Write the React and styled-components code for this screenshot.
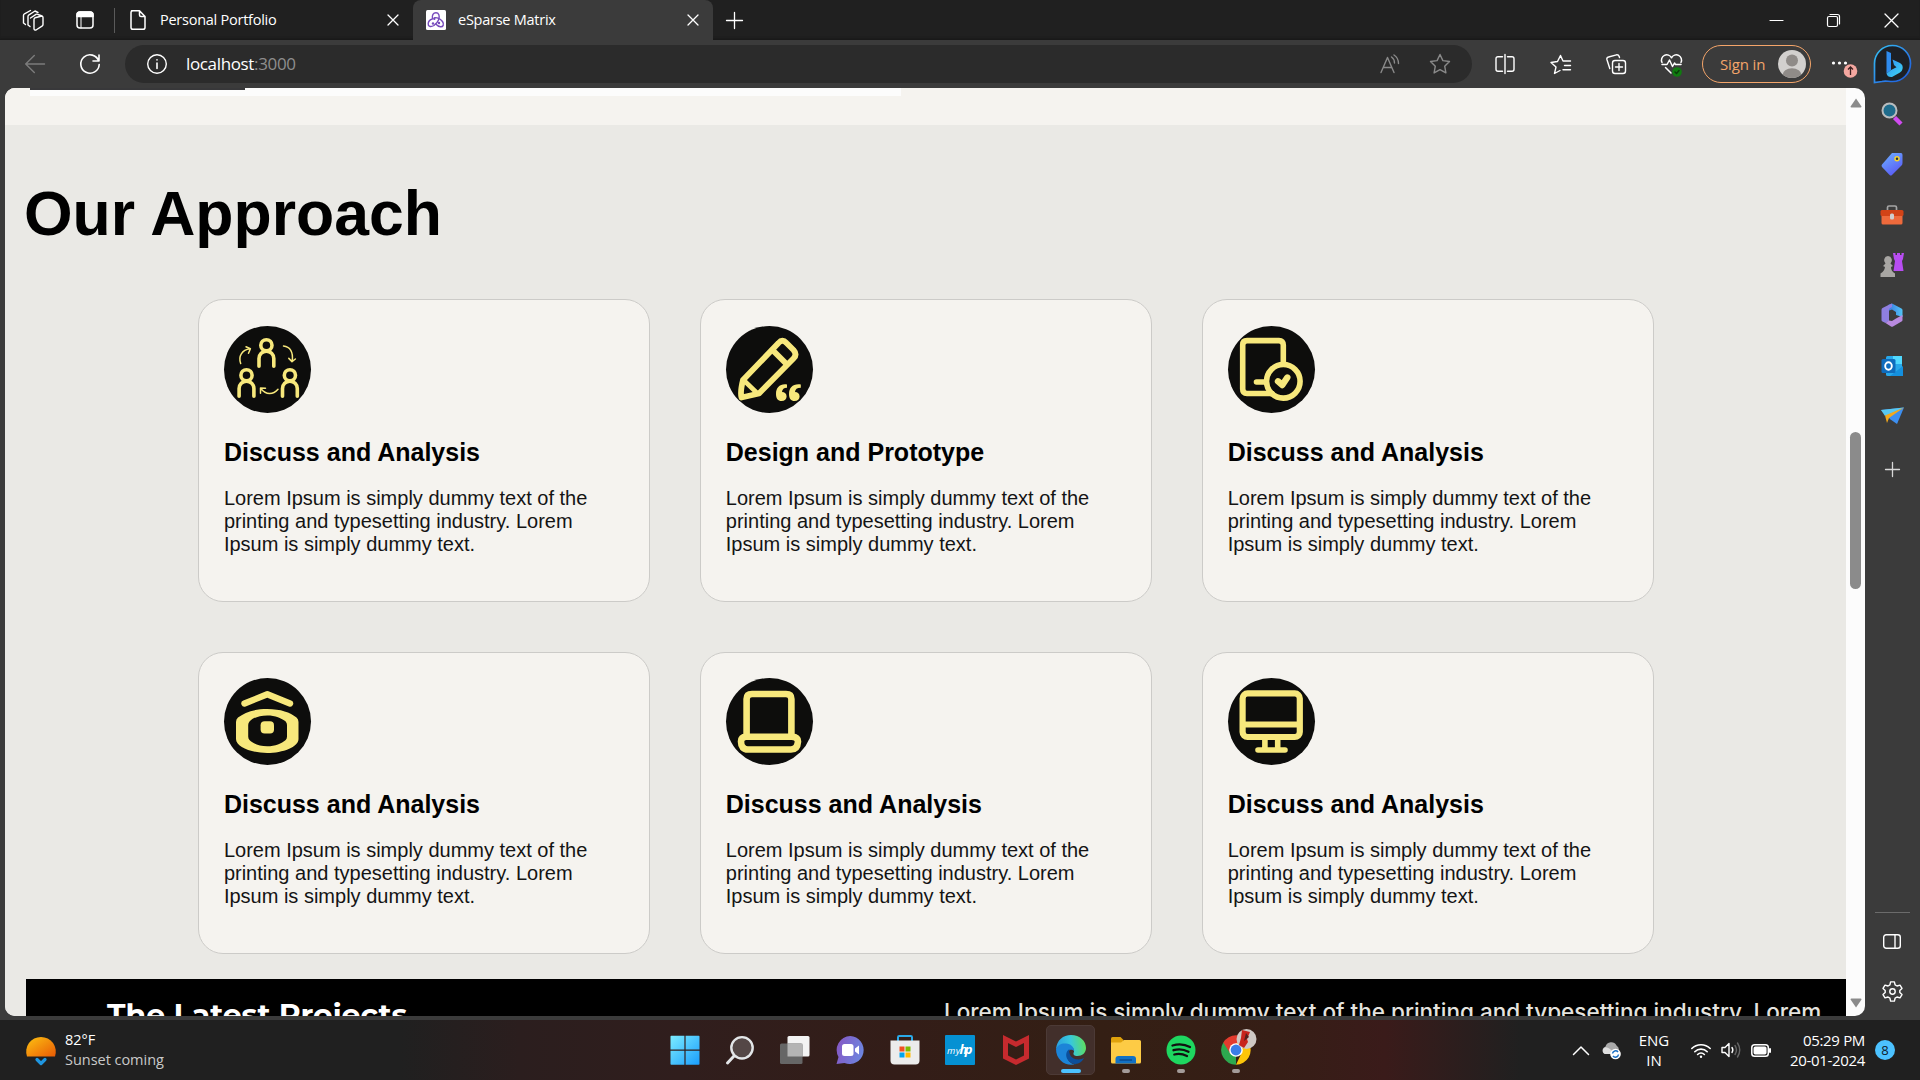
import React from "react";
import styled, { createGlobalStyle, css } from "styled-components";

const GlobalStyle = createGlobalStyle`
  *, *::before, *::after { box-sizing: border-box; }
  body { margin: 0; background: #3b3b3b; overflow: hidden; }
  h1, h2, h3, p { margin: 0; }
  svg { display: block; flex: none; overflow: visible; }
`;

const uiFont = css`
  font-family: "Open Sans", "Noto Sans", sans-serif;
`;

const Screen = styled.div`
  width: 1920px;
  height: 1080px;
  display: flex;
  flex-direction: column;
  overflow: hidden;
  background: #3b3b3b;
  ${uiFont}
`;

/* ---------- tab strip ---------- */

const TabStrip = styled.header`
  height: 40px;
  flex: none;
  display: flex;
  align-items: stretch;
  background: #202020;
  box-shadow: inset 0 -3px 3px -2px #161616;
`;

const StripTools = styled.div`
  width: 114px;
  display: flex;
  align-items: center;
  padding-left: 22px;
  gap: 32px;
`;

const StripDivider = styled.span`
  width: 1px;
  height: 25px;
  align-self: center;
  background: #5a5a5a;
`;

const Tab = styled.div`
  width: ${(p) => (p.$active ? 300 : 298)}px;
  display: flex;
  align-items: center;
  padding: 0 15px 0 13px;
  background: ${(p) => (p.$active ? "#3b3b3b" : "transparent")};
  border-radius: 8px 8px 0 0;
  color: #fff;
`;

const TabTitle = styled.span`
  flex: 1;
  margin-left: 12px;
  font-size: 14.5px;
  letter-spacing: -0.25px;
  line-height: 20px;
  white-space: nowrap;
`;

const NewTab = styled.div`
  width: 42px;
  display: flex;
  align-items: center;
  justify-content: center;
`;

const WindowButtons = styled.div`
  margin-left: auto;
  display: flex;
  align-items: center;
`;

const WindowButton = styled.div`
  width: 57.5px;
  display: flex;
  justify-content: center;
`;

/* ---------- toolbar ---------- */

const Toolbar = styled.div`
  height: 48px;
  flex: none;
  display: flex;
  align-items: center;
`;

const NavButton = styled.div`
  width: 55px;
  display: flex;
  justify-content: center;
`;

const NavGroup = styled.div`
  width: 125px;
  display: flex;
  padding-left: 7px;
`;

const AddressBar = styled.div`
  width: 1347px;
  height: 38px;
  border-radius: 19px;
  background: #2b2b2b;
  display: flex;
  align-items: center;
  padding: 0 21px 0 22px;
`;

const Url = styled.div`
  flex: 1;
  margin-left: 19px;
  font-size: 17px;
  letter-spacing: -0.35px;
  line-height: 24px;
  color: #fff;
  span { color: #8e8e8e; }
`;

const AddressIcons = styled.div`
  display: flex;
  gap: 29px;
  align-items: center;
`;

const ToolbarIcons = styled.div`
  width: 230px;
  padding-left: 5px;
  display: flex;
`;

const ToolbarIcon = styled.div`
  width: 55.6px;
  display: flex;
  justify-content: center;
`;

const SignIn = styled.div`
  width: 109px;
  height: 38px;
  border: 1.5px solid #f4a56a;
  border-radius: 19px;
  display: flex;
  align-items: center;
  justify-content: space-between;
  padding: 0 4px 0 17px;
  color: #f4a56a;
  font-size: 15px;
  letter-spacing: -0.15px;
`;

const MenuSlot = styled.div`
  width: 51px;
  margin-left: 11px;
`;

/* ---------- body ---------- */

const Body = styled.div`
  height: 932px;
  flex: none;
  display: flex;
  padding-left: 5px;
`;

const Viewport = styled.main`
  width: 1860px;
  height: 928px;
  display: flex;
  overflow: hidden;
  border-radius: 10px;
  background: #fcfcfc;
`;

const Page = styled.div`
  width: 1841px;
  height: 928px;
  overflow: hidden;
  background: #eae9e5;
  font-family: "Liberation Sans", Arial, sans-serif;
`;

const PreviousSection = styled.div`
  height: 37px;
  background: #f5f3ef;
  padding-left: 25px;
`;

const PreviousPanel = styled.div`
  width: 871px;
  height: 8px;
  background: #fcfcfc;
`;

const PreviousBar = styled.div`
  width: 215px;
  height: 2px;
  background: #38383a;
`;

const Heading = styled.h1`
  margin: 52px 0 0 19px;
  font-size: 62.5px;
  line-height: 72px;
  font-weight: 700;
  color: #000;
`;

const CardGrid = styled.section`
  margin: 50.4px 0 0 193.4px;
  display: grid;
  grid-template-columns: repeat(3, 451.6px);
  grid-auto-rows: 302.2px;
  gap: 50px 50.3px;
`;

const Card = styled.article`
  border: 1px solid #cccbc8;
  border-radius: 25px;
  background: #f5f3ef;
  padding: 25.25px 24.5px;
`;

const CardTitle = styled.h2`
  margin-top: 25.4px;
  font-size: 25px;
  line-height: 29px;
  font-weight: 700;
  color: #000;
`;

const CardText = styled.p`
  width: 375px;
  margin-top: 20px;
  font-size: 20px;
  line-height: 23px;
  color: #141414;
`;

const Projects = styled.section`
  height: 80px;
  margin: 25px 0 0 21px;
  display: flex;
  background: #000;
  padding-left: 81px;
`;

const ProjectsTitle = styled.h2`
  width: 837px;
  margin-top: 18px;
  font-family: "Montserrat", "Open Sans", sans-serif;
  font-size: 29.9px;
  font-weight: 700;
  line-height: 36px;
  color: #fff;
`;

const ProjectsText = styled.p`
  margin-top: 18px;
  font-family: Inter, sans-serif;
  font-size: 22.5px;
  font-weight: 500;
  line-height: 30px;
  color: #e4e3df;
  white-space: nowrap;
`;

const ScrollTrack = styled.div`
  width: 19px;
  display: flex;
  flex-direction: column;
  align-items: center;
  padding: 10px 0 8px;
`;

const ScrollThumb = styled.div`
  width: 11px;
  height: 157px;
  margin: 324px 0 auto;
  border-radius: 6px;
  background: #8b8b8b;
`;

const Sidebar = styled.aside`
  width: 54px;
  display: flex;
  flex-direction: column;
  align-items: center;
  padding: 1px 0 3px;
`;

const SideIcon = styled.div`
  height: 50.3px;
  display: flex;
  align-items: center;
`;

const AddButton = styled(SideIcon)`
  margin-top: 3px;
`;

const SideDivider = styled.div`
  width: 35px;
  height: 1px;
  margin: auto 0 3px;
  background: #6b6b6b;
`;

/* ---------- taskbar ---------- */

const Taskbar = styled.footer`
  height: 60px;
  flex: none;
  display: flex;
  align-items: center;
  color: #fff;
  font-size: 14.5px;
  line-height: 20px;
  letter-spacing: -0.03px;
  background: linear-gradient(90deg, #202020 0, #202020 400px, #2b1e1e 520px, #301e1d 680px, #331d18 900px, #341f14 1100px, #361e16 1280px, #3a1b1a 1385px, #202020 1520px);
`;

const Weather = styled.div`
  width: 660.5px;
  padding-left: 26px;
  display: flex;
  align-items: center;
  gap: 9px;
`;

const Muted = styled.div`
  color: #c9c9c9;
`;

const Apps = styled.div`
  display: flex;
`;

const AppTile = styled.div`
  width: 49px;
  height: 50px;
  margin-right: 6.1px;
  border-radius: 5px;
  display: flex;
  flex-direction: column;
  align-items: center;
  justify-content: space-between;
  padding: 9px 0 1px;
  border: 1px solid ${(p) => (p.$active ? "#4c3a36" : "transparent")};
  background: ${(p) => (p.$active ? "#422f2b" : "transparent")};
`;

const Indicator = styled.span`
  width: ${(p) => (p.$active ? 20 : 8)}px;
  height: 4px;
  border-radius: 2px;
  background: ${(p) => (p.$active ? "#4cc2ff" : p.$open ? "#a39b99" : "transparent")};
`;

const Tray = styled.div`
  margin-left: auto;
  display: flex;
  align-items: center;
  padding-right: 25px;
`;

const TrayIcon = styled.div`
  width: 30px;
  display: flex;
  justify-content: center;
`;

const Language = styled.div`
  width: 56px;
  margin-right: 4px;
  text-align: center;
  font-size: 15px;
`;

const Clock = styled.div`
  width: 89px;
  text-align: right;
  font-size: 15px;
  letter-spacing: -0.33px;
  white-space: nowrap;
`;

const CountBadge = styled.div`
  width: 20px;
  height: 20px;
  margin-left: 10px;
  border-radius: 50%;
  background: #4cc2ff;
  color: #10202a;
  font-size: 13px;
  text-align: center;
`;

/* ---------- drawings ---------- */

const Line = ({ w = 20, h = w, box = `0 0 ${w} ${h}`, color = "#fff", sw = 1.3, children }) => (
  <svg width={w} height={h} viewBox={box} fill="none" stroke={color} strokeWidth={sw} strokeLinecap="round" strokeLinejoin="round">
    {children}
  </svg>
);

const CloseIcon = ({ size = 9 }) => (
  <Line w={size} sw={1.3}>
    <path d={`M0 0L${size} ${size}M${size} 0L0 ${size}`} />
  </Line>
);

const Disc = ({ children }) => (
  <svg width="87" height="87" viewBox="0 0 87 87" fill="none" stroke="#f7e87c" strokeLinecap="round" strokeLinejoin="round">
    <circle cx="43.5" cy="43.5" r="43.5" fill="#0d0d0c" stroke="none" />
    {children}
  </svg>
);

const Person = ({ x, y }) => (
  <g transform={`translate(${x} ${y})`} strokeWidth="3.6">
    <circle r="5.6" />
    <path d="M-7.4 21V13.2a7.4 7.4 0 0 1 14.8 0V21" />
  </g>
);

const discIcons = {
  team: (
    <Disc>
      <Person x={42.4} y={19.3} />
      <Person x={22.5} y={49.3} />
      <Person x={65.9} y={49.3} />
      <g strokeWidth="1.5">
        <path d="M16.7 37.5C14 30 18 24 26 22.8M22 20.7L26.4 22.7L24.5 27.2" />
        <path d="M59.5 20C66 20.5 69.5 26 68.2 35.2M64.8 32.4L68 35.6L71.4 33" />
        <path d="M54 63.2C49 69 42 69 37 62.7M36.5 67.3V62L41.5 62.2" />
      </g>
    </Disc>
  ),
  pencil: (
    <Disc>
      <g strokeWidth="5.8">
        <path d="M17 54L52.5 17Q56.3 12.5 60.5 17L67.5 24Q71.5 28.5 67.5 32.5L33 67.5L15.5 71.5Q14 66 17 54Z" />
        <path d="M46.5 24L60 37.5" />
        <path d="M18 54.5L31 67" strokeWidth="4.6" />
      </g>
      <g fill="#f7e87c" stroke="none">
        <path d="M61 58.5C54 57.5 50 61.5 50 68C50 72.5 52 75 55.5 75C58.7 75 60.6 73 60.6 70.4C60.6 67.6 58.7 66 56 66C56.2 63 58 61.8 61 61.7Z" />
        <path d="M74.8 58.5C67 57.5 63 61.5 63 68C63 72.5 65 75 68.5 75C71.7 75 73.6 73 73.6 70.4C73.6 67.6 71.7 66 69 66C69.2 63 71 61.8 74.8 61.7Z" />
      </g>
    </Disc>
  ),
  tablet: (
    <Disc>
      <g strokeWidth="5.6">
        <path d="M55.3 37V19Q55.3 14.6 51 14.6H19Q14.7 14.6 14.7 19V63Q14.7 67.5 19 67.5H44M28.5 56H38" />
        <circle cx="55.3" cy="55.3" r="16.8" />
        <path d="M50 55.3L54.3 59L59.3 51.500" strokeWidth="6.4" />
      </g>
    </Disc>
  ),
  camera: (
    <Disc>
      <path d="M20.5 25.500L43.3 16.300L66 25.500" strokeWidth="6.4" />
      <g fill="#f7e87c" stroke="none">
        <path fillRule="evenodd" d="M43.2 31C57 31 66 34.500 72.500 39.500Q74.500 41 74.500 44V61C74.5 69 59 75 43.2 75S12 69 12 61V44Q12 41 14 39.500C20.500 34.500 29.500 31 43.2 31ZM43.2 37.4C35 37.4 29 40 25.500 43.500Q24.200 45 24.200 47V58.500Q24.200 60.500 25.500 62C29 65.500 35 68.3 43.2 68.3S57.500 65.500 61.700 62Q63 60.500 63 58.500V47Q63 45 61.700 43.500C57.500 40 51.500 37.4 43.2 37.4Z" />
        <rect x="36.6" y="43.2" width="13.4" height="12.2" rx="4" />
      </g>
    </Disc>
  ),
  laptop: (
    <Disc>
      <path d="M20.6 56V21Q20.6 16 26 16H60Q65.4 16 65.4 21V56" strokeWidth="6.6" />
      <path d="M20 58.8H66Q72 59 72 63.5Q71.5 71.5 65 71.5H22Q15 71.5 15 63.5Q15 59 20 58.8Z" strokeWidth="6.6" />
    </Disc>
  ),
  desktop: (
    <Disc>
      <rect x="14.6" y="15.4" width="57.2" height="43.6" rx="5" strokeWidth="6.2" />
      <path d="M15 46.6H71" strokeWidth="6" />
      <path d="M36.9 61V70M49.7 61V70M30 72H57" strokeWidth="5.6" />
    </Disc>
  ),
};

const cards = [
  ["team", "Discuss and Analysis"],
  ["pencil", "Design and Prototype"],
  ["tablet", "Discuss and Analysis"],
  ["camera", "Discuss and Analysis"],
  ["laptop", "Discuss and Analysis"],
  ["desktop", "Discuss and Analysis"],
];

const BingIcon = () => (
  <svg width="38" height="40" viewBox="0 0 38 40">
    <defs>
      <linearGradient id="bingRing" x1="0" y1="0" x2="1" y2="1">
        <stop offset="0" stopColor="#35c5f5" />
        <stop offset="0.6" stopColor="#2a7de8" />
        <stop offset="1" stopColor="#1b58d8" />
      </linearGradient>
      <linearGradient id="bingB" x1="0" y1="0" x2="1" y2="1">
        <stop offset="0" stopColor="#2f8cf0" />
        <stop offset="1" stopColor="#3fd8f5" />
      </linearGradient>
    </defs>
    <path d="M1.5 38.5V19.5A18 18 0 1 1 19.5 37.5C15 37.5 12 36.5 9 37.5Z" fill="#1d2026" stroke="url(#bingRing)" strokeWidth="1.7" />
    <path d="M13.500 7L18 9V26L13.500 29.5Z" fill="#2e8bf0" />
    <path d="M13.500 29.5L18 26L23.500 23.300L21 21L19.500 15.500L27 19Q30.500 21 29.500 25Q29 27.500 27 28.500L19 33Q14.500 33.500 13.500 29.5Z" fill="url(#bingB)" />
  </svg>
);

const sideIcons = [
  <svg width="22" height="24" viewBox="0 0 22 24">
    <path d="M13.5 15.5L20 22" stroke="#d04bf0" strokeWidth="4.4" />
    <circle cx="8.5" cy="8.5" r="7" fill="#1f6c8c" stroke="#b9bcbe" strokeWidth="2" />
  </svg>,
  <svg width="22" height="24" viewBox="0 0 22 24">
    <defs>
      <linearGradient id="tag" x1="0" y1="0" x2="0.6" y2="1">
        <stop offset="0" stopColor="#6db4ff" />
        <stop offset="1" stopColor="#5a5cf6" />
      </linearGradient>
    </defs>
    <path d="M11 1H20Q21.5 1 21.5 3V11Q21.5 12.5 20.5 13.5L11 23Q9.8 24 8.6 23L1 15Q0 13.7 1 12.5Z" fill="url(#tag)" />
    <circle cx="16" cy="6.7" r="2" fill="#234" stroke="#f6d32d" strokeWidth="1.5" />
  </svg>,
  <svg width="24" height="20" viewBox="0 0 24 20">
    <path d="M7.5 6V2.5Q7.5 1 9 1H15Q16.5 1 16.5 2.5V6" fill="none" stroke="#a5a5a5" strokeWidth="1.7" />
    <rect x="1.5" y="9" width="21" height="10.5" rx="1.5" fill="#ee6a3c" />
    <rect x="0.5" y="5" width="23" height="6" rx="1.5" fill="#d24317" />
    <rect x="10" y="8.5" width="4" height="6" rx="1.5" fill="#cfcfcf" />
  </svg>,
  <svg width="24" height="24" viewBox="0 0 24 24">
    <path d="M13 0H15.5V2H17V0H20V2H21.5V0H24L23 6L22 8L23.5 18H13.5L15 8L14 6Z" fill="#b84df2" />
    <path d="M8 3A4.300 4.300 0 0 1 10.5 10.5L13 13L11 14Q11 18 15 20.5V24H0.500V20.5Q4.500 18 5 14L3 13L5.5 10.5A4.300 4.300 0 0 1 8 3Z" fill="#a8a6a3" />
  </svg>,
  <svg width="22" height="24" viewBox="0 0 22 24">
    <defs>
      <linearGradient id="m365" x1="0" y1="0" x2="1" y2="0">
        <stop offset="0" stopColor="#3a78e0" />
        <stop offset="1" stopColor="#52c4f6" />
      </linearGradient>
    </defs>
    <path d="M11 0.5L20.500 5.500Q21.500 6 21.500 7V14L15 12V9L11 6.5L7 8V2Z" fill="url(#m365)" />
    <path d="M7.500 2L1.500 5Q0.500 5.500 0.500 7V17Q0.500 18 1.500 18.500L4.500 20L8 18V7Q8 5 11 4V0.500Z" fill="#8f7fe0" />
    <path d="M4.500 20L10 23.500Q11 24 12 23.500L20.500 18.500Q21.500 18 21.500 17V12L15 15.500L11 18L8 17.500Z" fill="#b98ae0" />
  </svg>,
  <svg width="22" height="22" viewBox="0 0 22 22">
    <rect x="5" y="1" width="16" height="20" rx="1.5" fill="#28a8ea" />
    <rect x="12" y="1" width="9" height="8" fill="#50d9ff" />
    <path d="M22 11V21H9Z" fill="#1490df" />
    <rect x="0.5" y="4" width="14" height="14" rx="1.5" fill="#0f6cbd" />
    <ellipse cx="7.5" cy="11" rx="3.3" ry="3.7" fill="none" stroke="#fff" strokeWidth="1.9" />
  </svg>,
  <svg width="23" height="18" viewBox="0 0 23 18">
    <path d="M0 3L23 0.5L16 17L9.5 12.5Z" fill="#3d8ff0" />
    <path d="M0 3L23 0.5L4 9Z" fill="#58c8f0" />
    <path d="M4 8.5L23 0.5L8 11L6 16Z" fill="#f3a91c" />
  </svg>,
];

const apps = [
  {
    icon: (
      <svg width="30" height="30" viewBox="0 0 30 30">
        <defs>
          <linearGradient id="win" x1="0" y1="0" x2="1" y2="1">
            <stop offset="0" stopColor="#7cecff" />
            <stop offset="1" stopColor="#1a9dfc" />
          </linearGradient>
        </defs>
        <path d="M0.5 1.5Q0.5 0.7 1.3 0.7H14.4V14.6H0.5ZM15.6 0.7H28.7Q29.5 0.7 29.5 1.5V14.6H15.6ZM0.5 15.8H14.4V29.7H1.3Q0.5 29.7 0.5 28.9ZM15.6 15.8H29.5V28.9Q29.5 29.7 28.7 29.7H15.6Z" fill="url(#win)" />
      </svg>
    ),
  },
  {
    icon: (
      <svg width="30" height="30" viewBox="0 0 30 30" fill="#544746" stroke="#e3e6e8">
        <path d="M9 21L2.5 28" strokeWidth="3" strokeLinecap="round" />
        <circle cx="17" cy="12.8" r="10.7" strokeWidth="2.4" />
      </svg>
    ),
  },
  {
    icon: (
      <svg width="30" height="30" viewBox="0 0 30 30">
        <rect x="7.5" y="1" width="22" height="20.5" rx="1.5" fill="#f3f3f3" />
        <rect x="0" y="8.5" width="22.5" height="20.5" rx="1.5" fill="#666" />
        <path d="M7.5 8.5H22.5V21.5H7.5Z" fill="#b4b4b4" />
      </svg>
    ),
  },
  {
    icon: (
      <svg width="30" height="30" viewBox="0 0 30 30">
        <defs>
          <linearGradient id="chat" x1="0" y1="0.3" x2="1" y2="0.6">
            <stop offset="0" stopColor="#8558c4" />
            <stop offset="1" stopColor="#6c86e0" />
          </linearGradient>
        </defs>
        <path d="M15.3 1A14 14 0 1 1 9.5 28L1.5 29L3.5 22A14 14 0 0 1 15.3 1Z" fill="url(#chat)" />
        <rect x="7" y="9" width="11.5" height="12" rx="2.5" fill="#fff" />
        <path d="M20 13.5L24 10.5V19.5L20 16.5Z" fill="#fff" />
      </svg>
    ),
  },
  {
    icon: (
      <svg width="30" height="30" viewBox="0 0 30 30">
        <path d="M8 7V2.2Q8 1 9.2 1H20.8Q22 1 22 2.2V7" fill="none" stroke="#2aaae8" strokeWidth="2" />
        <path d="M0.5 5.5H29.5V25.5Q29.5 29.5 25.5 29.5H4.5Q0.5 29.5 0.5 25.5Z" fill="#ececec" />
        <rect x="9.5" y="11.5" width="5" height="5" fill="#f25022" />
        <rect x="15.5" y="11.5" width="5" height="5" fill="#7fba00" />
        <rect x="9.5" y="17.5" width="5" height="5" fill="#00a4ef" />
        <rect x="15.5" y="17.5" width="5" height="5" fill="#ffb900" />
      </svg>
    ),
  },
  {
    icon: (
      <svg width="30" height="30" viewBox="0 0 30 30">
        <rect width="30" height="30" rx="1" fill="#0591d3" />
        <text x="2" y="18.5" fill="#fff" fontFamily="Open Sans, sans-serif" fontSize="9.5" fontStyle="italic" textLength="13">my</text>
        <text x="14.5" y="18.5" fill="#fff" fontFamily="Open Sans, sans-serif" fontSize="13" fontWeight="700" fontStyle="italic" textLength="13">hp</text>
      </svg>
    ),
  },
  {
    icon: (
      <svg width="28" height="30" viewBox="0 0 28 30">
        <path d="M1 0L14 6.5L27 0V23.5L14 30L1 23.5ZM6 8V20.5L14 24.5L22 20.5V8L14 12Z" fill="#c62a2e" fillRule="evenodd" />
      </svg>
    ),
  },
  {
    active: true,
    icon: (
      <svg width="30" height="30" viewBox="0 0 30 30">
        <defs>
          <linearGradient id="edgeTop" x1="0" y1="0.5" x2="1" y2="0.4">
            <stop offset="0" stopColor="#2a9fe0" />
            <stop offset="0.5" stopColor="#38c8dc" />
            <stop offset="1" stopColor="#5fdf5c" />
          </linearGradient>
        </defs>
        <path d="M0 14C1 5 7 0 15 0C24 0 30 6 30 13C30 18 26 21 21.5 21C17 21 17 18.5 18 17C18.5 14 16 10 10 10C5 10 2 12 0 14Z" fill="url(#edgeTop)" />
        <path d="M0 14C2 9.500 6 8 10 8.500C15 9 18 12 18.200 16C15 13 10.500 16 11 21C11.500 27 17 30 20 29C11 32 0 26 0 14Z" fill="#1c84d8" />
        <path d="M13.500 14C10 16 9 21 12 25C15 29 19 29.500 22 28.500C25 27.500 27.500 24.500 28 23C24 25.500 16 25 14 19.500C13 17 13 15.500 13.500 14Z" fill="#0c4f9c" />
      </svg>
    ),
  },
  {
    open: true,
    icon: (
      <svg width="30" height="30" viewBox="0 0 30 30">
        <path d="M0 3.500Q0 2 1.500 2H9.500L12.500 5V10H0Z" fill="#e0a20c" />
        <path d="M0 7.500H10L13 5H28.500Q30 5 30 6.500V27Q30 28.500 28.500 28.500H1.500Q0 28.500 0 27Z" fill="#fdcb45" />
        <path d="M4.500 28.500V24Q4.500 21 7.500 21H22Q25 21 25 24V28.500Z" fill="#1271c4" />
        <path d="M8.500 25H21" stroke="#0a4a8f" strokeWidth="1.500" />
      </svg>
    ),
  },
  {
    open: true,
    icon: (
      <svg width="30" height="30" viewBox="0 0 30 30">
        <circle cx="15" cy="15" r="14.500" fill="#1ed760" />
        <path d="M6.500 10.500C12 8.800 19 9.300 24 12M7.500 15.200C12 13.800 18 14.300 22.500 16.700M8.300 19.500C12 18.500 17 19 21 21" fill="none" stroke="#111" strokeWidth="2.300" strokeLinecap="round" />
      </svg>
    ),
  },
  {
    open: true,
    icon: (
      <svg width="30" height="30" viewBox="0 0 30 30">
        <path d="M15 15L2.300 7.500A14.700 14.700 0 0 1 27.700 7.700Z" fill="#e33b2e" />
        <path d="M15 15L15.000 29.700A14.700 14.700 0 0 1 2.300 7.500Z" fill="#2da94f" />
        <path d="M15 8H27.900A14.700 14.700 0 0 1 15 29.700L20.500 18Z" fill="#fdc50a" />
        <path d="M2.300 7.500L9 18L15 8Z" fill="#e33b2e" />
        <circle cx="15" cy="15" r="6.800" fill="#fff" />
        <circle cx="15" cy="15" r="5.400" fill="#3a7de8" />
        <circle cx="25.500" cy="4" r="10" fill="#cfc8c4" />
        <path d="M21 -5L29 -3L26 4L27 7L23 13L18 10L20 3Z" fill="#c8241c" />
        <path d="M25 -2L28 2L23 6Z" fill="#56201d" />
      </svg>
    ),
  },
];

export default function App() {
  return (
    <Screen>
      <GlobalStyle />
      <TabStrip>
        <StripTools>
          <Line w={22} sw={1.4}>
            <path d="M8.500 8.500L14 4.800Q15 4.300 16 5L20 6.500Q21 7 21 8V15Q21 16 20 16.700L14 20.500Q12.500 21 12 19.500V10Q12 9 13 8.200L20 6.500M8 17L6 15.500V7Q6 6 7 5.300L13 1.500L16 3M3.500 15L1.500 13.500V6Q1.500 5 2.500 4.300L8.500 1" transform="translate(0 .5)" />
          </Line>
          <Line w={18} sw={1.5}>
            <rect x="1" y="1" width="16" height="16" rx="3" />
            <path d="M1 5.500V4Q1 1 4 1H14Q17 1 17 4V5.500Z" fill="#fff" />
            <path d="M5 6V17" strokeWidth="1" />
          </Line>
        </StripTools>
        <StripDivider />
        <Tab>
          <Line w={20} h={20} sw={1.5}>
            <path d="M3.500 0.700H11.500L17 6.500V17.500Q17 19.300 15 19.300H5Q3 19.300 3 17.500V2.500Q3 0.700 5 0.700M11.500 0.700V5Q11.500 6.500 13 6.500H17" />
          </Line>
          <TabTitle>Personal Portfolio</TabTitle>
          <CloseIcon size={10} />
        </Tab>
        <Tab $active>
          <svg width="20" height="20" viewBox="0 0 20 20">
            <rect width="20" height="20" rx="1.500" fill="#fff" />
            <g fill="none" stroke="#764abc" strokeWidth="1.400">
              <path d="M6.500 9.500C5.500 5 7.500 2.800 10 2.800S14.300 5.500 12.500 10C11.500 12.500 10 14 8 15.500C4.500 17.500 2 16.500 2.200 13.800C2.300 11 4.500 9.500 6.500 9" />
              <path d="M8 8C10 7 14 8 16.500 11.500C18.500 14.500 17 17 14.500 16.800C12.500 16.700 11 15.500 9.500 13.800" />
            </g>
            <circle cx="8.300" cy="8.700" r="1.200" fill="#764abc" />
            <circle cx="13" cy="13" r="1.200" fill="#764abc" />
            <circle cx="7" cy="13.500" r="1.200" fill="#764abc" />
          </svg>
          <TabTitle>eSparse Matrix</TabTitle>
          <CloseIcon size={10} />
        </Tab>
        <NewTab>
          <Line w={17}>
            <path d="M8.500 0.500V16.500M0.500 8.500H16.500" />
          </Line>
        </NewTab>
        <WindowButtons>
          <WindowButton>
            <Line w={13} sw={1.200}>
              <path d="M0 6.500H13" />
            </Line>
          </WindowButton>
          <WindowButton>
            <Line w={13} sw={1.200}>
              <rect x="0.500" y="2.500" width="10" height="10" rx="1.500" />
              <path d="M3 0.500H10.500Q12.500 0.500 12.500 2.500V10" />
            </Line>
          </WindowButton>
          <WindowButton>
            <CloseIcon size={13} />
          </WindowButton>
        </WindowButtons>
      </TabStrip>

      <Toolbar>
        <NavGroup>
          <NavButton>
            <Line w={20} color="#7c7c7c" sw={1.400}>
              <path d="M19.500 10H0.700M9.300 1.500L0.700 10L9.300 18.500" />
            </Line>
          </NavButton>
          <NavButton>
            <Line w={20} sw={1.600}>
              <path d="M18.700 7A9.200 9.200 0 1 0 19.200 10.500M19 1V7H13" />
            </Line>
          </NavButton>
        </NavGroup>
        <AddressBar>
          <Line w={20} sw={1.400}>
            <circle cx="10" cy="10" r="9.300" />
            <path d="M10 9V14.500M10 5.800V6" strokeWidth="1.600" />
          </Line>
          <Url>
            localhost<span>:3000</span>
          </Url>
          <AddressIcons>
            <Line w={20} color="#8a8a8a" sw={1.400}>
              <path d="M1 18.500L7.500 3.500L14 18.500M3.300 13.500H11.700M11.500 3Q14.500 5 14.500 9M14 1Q18.500 4 18.500 9.500" />
            </Line>
            <Line w={22} color="#8a8a8a" sw={1.400}>
              <path d="M11 1.500L13.900 7.600L20.500 8.500L15.700 13.200L16.900 19.900L11 16.700L5.100 19.900L6.300 13.200L1.500 8.500L8.100 7.600Z" />
            </Line>
          </AddressIcons>
        </AddressBar>
        <ToolbarIcons>
          <ToolbarIcon>
            <Line w={20} sw={1.400}>
              <path d="M10 0.500V19.500M7.500 2.800H3Q1 2.800 1 4.800V15.200Q1 17.200 3 17.200H7.500M12.500 2.800H17Q19 2.800 19 4.800V15.200Q19 17.200 17 17.200H12.500" />
            </Line>
          </ToolbarIcon>
          <ToolbarIcon>
            <Line w={21} sw={1.400}>
              <path d="M10 16.500L4.500 19.500L6 13L1 8.500L7.500 7.500L10.500 1.500L13 7H20.500M14.500 11.500H20.500M13 15.700H20.500" />
            </Line>
          </ToolbarIcon>
          <ToolbarIcon>
            <Line w={20} sw={1.400}>
              <rect x="6.500" y="6.500" width="13" height="13" rx="2.500" />
              <path d="M13 9.500V16.500M9.500 13H16.500M3.800 14.500L0.900 5.500Q0.500 3.500 2.500 3L10.500 0.800Q12.500 0.500 13.200 2.500L13.500 3.500" />
            </Line>
          </ToolbarIcon>
          <ToolbarIcon>
            <Line w={21} sw={1.500}>
              <path d="M1 8.500A5 5 0 0 1 10.500 3.800A5 5 0 0 1 20 8.500M1 10.500H6L8.500 6L11.500 12.500L13.500 9L14.500 10.500H20M4.500 13.500L10 19" />
              <circle cx="16" cy="18" r="4.800" fill="#107c10" stroke="none" />
              <path d="M14 18L15.500 19.500L18 16.500" stroke="#0a3d0a" />
            </Line>
          </ToolbarIcon>
        </ToolbarIcons>
        <SignIn>
          Sign in
          <svg width="28" height="28" viewBox="0 0 28 28">
            <defs>
              <clipPath id="avatar">
                <circle cx="14" cy="14" r="14" />
              </clipPath>
            </defs>
            <circle cx="14" cy="14" r="14" fill="#d2d0ce" />
            <g clipPath="url(#avatar)" fill="#8f8b88">
              <circle cx="14" cy="10.500" r="6" />
              <ellipse cx="14" cy="25" rx="9.500" ry="6.800" />
            </g>
          </svg>
        </SignIn>
        <MenuSlot>
          <svg width="50" height="28" viewBox="0 0 50 28">
            <g fill="#fff">
              <circle cx="11.500" cy="13" r="1.600" />
              <circle cx="17.500" cy="13" r="1.600" />
              <circle cx="23.500" cy="13" r="1.600" />
            </g>
            <circle cx="28.500" cy="21" r="6.800" fill="#f4a7a0" />
            <path d="M28.500 25V17.500M26 19.500L28.500 17L31 19.500" fill="none" stroke="#3b2020" strokeWidth="1.300" />
          </svg>
        </MenuSlot>
        <BingIcon />
      </Toolbar>

      <Body>
        <Viewport>
          <Page>
            <PreviousSection>
              <PreviousPanel>
                <PreviousBar />
              </PreviousPanel>
            </PreviousSection>
            <Heading>Our Approach</Heading>
            <CardGrid>
              {cards.map(([icon, title], i) => (
                <Card key={i}>
                  {discIcons[icon]}
                  <CardTitle>{title}</CardTitle>
                  <CardText>
                    Lorem Ipsum is simply dummy text of the printing and typesetting industry. Lorem Ipsum is simply dummy text.
                  </CardText>
                </Card>
              ))}
            </CardGrid>
            <Projects>
              <ProjectsTitle>The Latest Projects</ProjectsTitle>
              <ProjectsText>Lorem Ipsum is simply dummy text of the printing and typesetting industry. Lorem</ProjectsText>
            </Projects>
          </Page>
          <ScrollTrack>
            <svg width="12" height="10" viewBox="0 0 12 10">
              <path d="M6 0.500L11.500 8.500Q11.500 9.500 10.500 9.500H1.500Q0.500 9.500 0.500 8.500Z" fill="#8b8b8b" />
            </svg>
            <ScrollThumb />
            <svg width="12" height="10" viewBox="0 0 12 10">
              <path d="M6 9.500L11.500 1.500Q11.500 0.500 10.500 0.500H1.500Q0.500 0.500 0.500 1.500Z" fill="#8b8b8b" />
            </svg>
          </ScrollTrack>
        </Viewport>
        <Sidebar>
          {sideIcons.map((icon, i) => (
            <SideIcon key={i}>{icon}</SideIcon>
          ))}
          <AddButton>
            <Line w={15} color="#d8d8d8">
              <path d="M7.500 0.500V14.500M0.500 7.500H14.500" />
            </Line>
          </AddButton>
          <SideDivider />
          <SideIcon>
            <Line w={18} h={15} sw={1.400}>
              <rect x="0.700" y="0.700" width="16.600" height="13.600" rx="2.500" />
              <path d="M12 1V14" />
            </Line>
          </SideIcon>
          <SideIcon>
            <Line w={21} sw={1.400}>
              <path d="M8.600 0.900H12.400L13.100 3.900L15 5L18 4.100L20 7.400L17.800 9.500V11.500L20 13.600L18 16.900L15 16L13.100 17.100L12.400 20.100H8.600L7.900 17.100L6 16L3 16.900L1 13.600L3.200 11.500V9.500L1 7.400L3 4.100L6 5L7.900 3.900Z" />
              <circle cx="10.500" cy="10.500" r="2.700" />
            </Line>
          </SideIcon>
        </Sidebar>
      </Body>

      <Taskbar>
        <Weather>
          <svg width="30" height="31" viewBox="0 0 30 31">
            <defs>
              <linearGradient id="sun" x1="0" y1="0" x2="1" y2="1">
                <stop offset="0" stopColor="#fdc312" />
                <stop offset="1" stopColor="#e85a05" />
              </linearGradient>
            </defs>
            <path d="M1 21.500A14.800 14.800 0 1 1 29 21.500Z" fill="url(#sun)" />
            <path d="M11 24.500L15 28.500L19 24.500" fill="none" stroke="#1f96e0" strokeWidth="3.200" strokeLinecap="round" strokeLinejoin="round" />
          </svg>
          <div>
            <div>82°F</div>
            <Muted>Sunset coming</Muted>
          </div>
        </Weather>
        <Apps>
          {apps.map((app, i) => (
            <AppTile key={i} $active={app.active}>
              {app.icon}
              <Indicator $active={app.active} $open={app.open} />
            </AppTile>
          ))}
        </Apps>
        <Tray>
          <TrayIcon>
            <Line w={16} h={9} sw={1.500}>
              <path d="M0.500 8.500L8 1L15.500 8.500" />
            </Line>
          </TrayIcon>
          <TrayIcon>
            <svg width="20" height="18" viewBox="0 0 20 18">
              <path d="M4 12.500A4.500 4.500 0 0 1 4.500 5.500A6 6 0 0 1 15.500 4.500Q18 6 18 9V13Z" fill="#a9a9a9" />
              <path d="M3.500 13A4 4 0 0 1 3 6.500Q6 5.500 9 8L14 13Z" fill="#dedede" />
              <circle cx="14.500" cy="13" r="5.300" fill="#fff" />
              <path d="M11.500 12.500A3.100 3.100 0 0 1 17 11M17.500 13.500A3.100 3.100 0 0 1 12 15" fill="none" stroke="#1a6fc4" strokeWidth="1.500" />
            </svg>
          </TrayIcon>
          <Language>
            <div>ENG</div>
            <div>IN</div>
          </Language>
          <TrayIcon>
            <Line w={20} h={15} sw={1.600}>
              <path d="M0.800 5.500A13 13 0 0 1 19.200 5.500M3.800 8.700A8.700 8.700 0 0 1 16.200 8.700M6.600 11.500A4.900 4.900 0 0 1 13.400 11.500" />
              <circle cx="10" cy="13.700" r="1.200" fill="#fff" stroke="none" />
            </Line>
          </TrayIcon>
          <TrayIcon>
            <Line w={20} h={16} sw={1.400}>
              <path d="M1 5.500H4L8 1.500V14.500L4 10.500H1ZM11 5.500Q12.700 8 11 10.500" />
              <path d="M14 3.500Q17 8 14 12.500M16.500 1Q21 8 16.500 15" stroke="#666" />
            </Line>
          </TrayIcon>
          <TrayIcon>
            <Line w={20} h={13} sw={1.500}>
              <rect x="0.800" y="0.800" width="16.500" height="11.400" rx="2.800" />
              <rect x="3.300" y="3.300" width="11.500" height="6.400" rx="1" fill="#fff" />
              <path d="M19 5V8" strokeWidth="2" />
            </Line>
          </TrayIcon>
          <Clock>
            <div>05:29 PM</div>
            <div>20-01-2024</div>
          </Clock>
          <CountBadge>8</CountBadge>
        </Tray>
      </Taskbar>
    </Screen>
  );
}
